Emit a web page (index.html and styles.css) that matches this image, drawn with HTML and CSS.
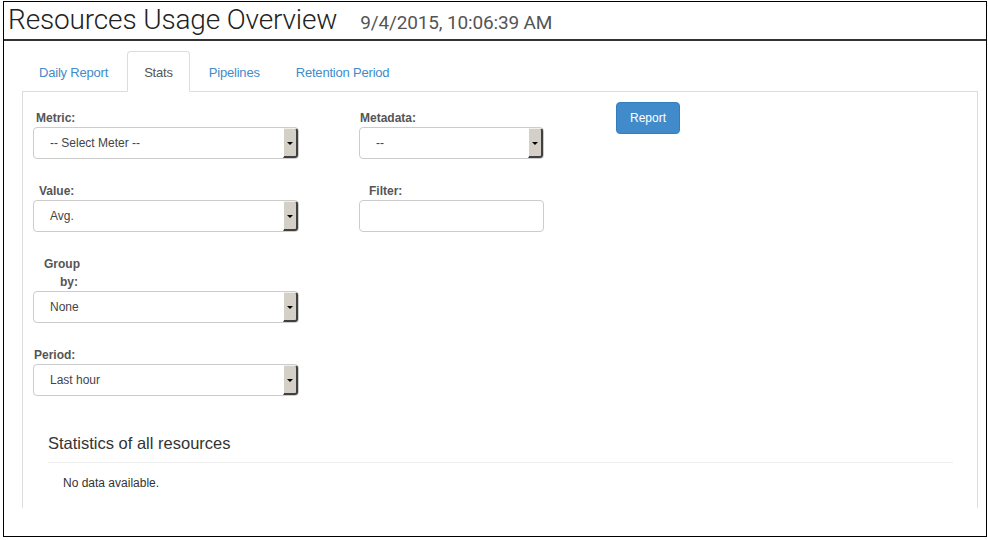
FILE: index.html
```html
<!DOCTYPE html>
<html>
<head>
<meta charset="utf-8">
<link rel="stylesheet" href="styles.css">
</head>
<body>
<div class="frame">
  <div class="header">
    <h1 class="title">Resources Usage Overview</h1>
    <span class="date">9/4/2015, 10:06:39 AM</span>
  </div>
  <div class="tabs-wrap">
    <ul class="tabs">
      <li class="tab"><a>Daily Report</a></li>
      <li class="tab active"><a>Stats</a></li>
      <li class="tab"><a>Pipelines</a></li>
      <li class="tab"><a>Retention Period</a></li>
    </ul>
    <div class="panel">
      <div class="form">
        <div class="col col-left">
          <div class="field">
            <label class="lbl lbl-metric">Metric:</label>
            <div class="select wide"><span class="val">-- Select Meter --</span><span class="arrow"></span></div>
          </div>
          <div class="field">
            <label class="lbl lbl-value">Value:</label>
            <div class="select wide"><span class="val">Avg.</span><span class="arrow"></span></div>
          </div>
          <div class="field">
            <label class="lbl lbl-group">Group<br><span class="by">by:</span></label>
            <div class="select wide"><span class="val">None</span><span class="arrow"></span></div>
          </div>
          <div class="field">
            <label class="lbl lbl-period">Period:</label>
            <div class="select wide"><span class="val">Last hour</span><span class="arrow"></span></div>
          </div>
        </div>
        <div class="col col-mid">
          <div class="field">
            <label class="lbl lbl-meta">Metadata:</label>
            <div class="select narrow"><span class="val">--</span><span class="arrow"></span></div>
          </div>
          <div class="field">
            <label class="lbl lbl-filter">Filter:</label>
            <div class="input narrow"></div>
          </div>
        </div>
        <div class="col col-btn">
          <button class="btn">Report</button>
        </div>
      </div>
      <div class="stats">
        <h3 class="stats-title">Statistics of all resources</h3>
        <p class="nodata">No data available.</p>
      </div>
    </div>
  </div>
</div>
</body>
</html>
```

FILE: styles.css
```css
html, body {
  margin: 0;
  padding: 0;
  background: #fff;
}
body {
  padding: 1px 0 0 3px;
  font-family: "Liberation Sans", Arial, sans-serif;
}
.frame {
  box-sizing: border-box;
  width: 984px;
  height: 536px;
  border: 1px solid #000;
}
.header {
  height: 37px;
  border-bottom: 2px solid #333;
  display: flex;
  align-items: baseline;
  padding-left: 4px;
}
.title {
  margin: 0;
  font-family: Roboto, sans-serif;
  font-weight: 300;
  font-size: 28px;
  line-height: 36px;
  color: #222;
  letter-spacing: -0.15px;
}
.date {
  margin-left: 23px;
  font-family: Roboto, sans-serif;
  font-weight: 400;
  font-size: 19px;
  color: #555;
  letter-spacing: -0.15px;
}
.tabs-wrap {
  padding: 10px 8px 0 18px;
}
.tabs {
  list-style: none;
  margin: 0;
  padding: 0;
  display: flex;
  height: 40px;
}
.tab {
  margin-right: 2px;
}
.tab a {
  display: block;
  box-sizing: border-box;
  height: 41px;
  padding: 11px 16px 9px;
  line-height: 20px;
  font-size: 13px;
  letter-spacing: -0.2px;
  color: #428bca;
  border: 1px solid transparent;
  border-radius: 4px 4px 0 0;
}
.tab.active a {
  color: #555;
  background: #fff;
  border-color: #ddd #ddd transparent #ddd;
  position: relative;
  z-index: 1;
}
.panel {
  box-sizing: border-box;
  height: 417px;
  border: 1px solid #ddd;
  border-bottom: none;
  padding: 17px 0 0 10px;
}
.form {
  display: flex;
  align-items: flex-start;
}
.col-left { width: 266px; }
.col-mid { width: 185px; margin-left: 60px; }
.col-btn { margin-left: 72px; margin-top: -7px; }
.field {
  margin-bottom: 23px;
}
.lbl {
  display: block;
  font-size: 12px;
  font-weight: bold;
  color: #555;
  line-height: 18px;
}
.lbl-metric { padding-left: 3px; }
.lbl-value { padding-left: 6px; }
.lbl-group { padding-left: 11px; line-height: 18px; }
.lbl-group .by { padding-left: 16px; }
.lbl-period { padding-left: 1px; }
.lbl-meta { padding-left: 1px; }
.lbl-filter { padding-left: 10px; }
.select, .input {
  box-sizing: border-box;
  height: 32px;
  border: 1px solid #ccc;
  border-radius: 4px;
  display: flex;
  align-items: center;
  background: #fff;
}
.wide { width: 266px; }
.narrow { width: 185px; }
.val {
  flex: 1;
  padding-left: 16px;
  font-size: 12px;
  color: #444;
}
.arrow {
  box-sizing: border-box;
  width: 15px;
  height: 30px;
  background: #d4d0c8;
  border-left: 1px solid #fff;
  border-top: 1px solid #f0efea;
  border-right: 2px solid #404040;
  border-bottom: 2px solid #404040;
  border-radius: 0 3px 3px 0;
  display: flex;
  align-items: center;
  justify-content: center;
}
.arrow::after {
  content: "";
  border-left: 3px solid transparent;
  border-right: 3px solid transparent;
  border-top: 3px solid #000;
  margin-top: 1px;
}
.btn {
  font-family: "Liberation Sans", Arial, sans-serif;
  font-size: 12px;
  color: #fff;
  background: #428bca;
  border: 1px solid #357ebd;
  border-radius: 4px;
  width: 64px;
  height: 32px;
  padding: 0;
}
.stats {
  margin: 13px 24px 0 15px;
}
.stats-title {
  margin: 0;
  font-size: 16.5px;
  font-weight: normal;
  color: #333;
  line-height: 22px;
  padding-bottom: 8px;
  border-bottom: 1px solid #eee;
}
.nodata {
  margin: 13px 0 0 15px;
  font-size: 12px;
  color: #333;
}
```
